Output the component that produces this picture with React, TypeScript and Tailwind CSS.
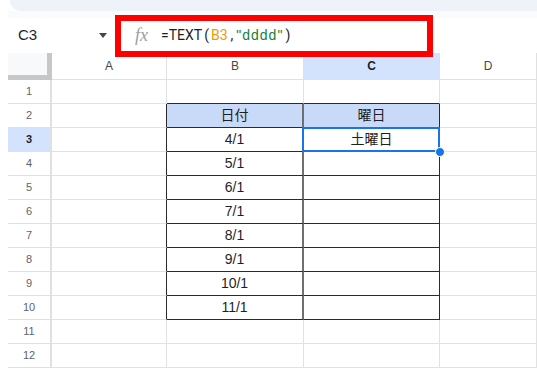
import React from "react";

const cols = [
  { key: "A", w: "w-[115px]" },
  { key: "B", w: "w-[137px]" },
  { key: "C", w: "w-[136px]" },
  { key: "D", w: "w-[97px]" },
];

const dates = ["4/1", "5/1", "6/1", "7/1", "8/1", "9/1", "10/1", "11/1"];

const cellText = (row: number, col: string) => {
  if (row === 2 && col === "B") return "日付";
  if (row === 2 && col === "C") return "曜日";
  if (row === 3 && col === "C") return "土曜日";
  if (col === "B" && row >= 3 && row <= 10) return dates[row - 3];
  return "";
};

const Cell = ({ row, col, w }: { row: number; col: string; w: string }) => {
  const inTable = row >= 2 && row <= 10 && (col === "B" || col === "C");
  let right = "border-r border-r-[#e2e2e2]";
  if (col === "A" && row >= 2 && row <= 10) right = "border-r border-r-[#2b2b2b]";
  if (col === "B" && inTable) right = "border-r-2 border-r-[#6f6f6f]";
  if (col === "C" && inTable) right = "border-r border-r-[#2b2b2b]";
  let bottom = "border-b border-b-[#e2e2e2]";
  if (row === 1 && (col === "B" || col === "C")) bottom = "border-b border-b-[#2b2b2b]";
  if (inTable) bottom = "border-b border-b-[#2b2b2b]";
  const bg = row === 2 && inTable ? "bg-[#c9daf8]" : "bg-white";
  const selected = row === 3 && col === "C";

  return (
    <div
      className={`relative flex h-[24px] shrink-0 items-center justify-center ${w} ${right} ${bottom} ${bg} font-['Liberation_Sans','Noto_Sans_CJK_JP',sans-serif] text-[14px] text-[#1f1f1f]`}
    >
      {cellText(row, col)}
      {selected && (
        <>
          <div className="absolute top-[-1px] left-[-2px] right-[-1px] bottom-[-1px] border-2 border-[#1a73e8]"></div>
          <div className="absolute right-[-6px] bottom-[-6px] z-10 h-[10px] w-[10px] rounded-full border border-white bg-[#1a73e8]"></div>
        </>
      )}
    </div>
  );
};

export default function App() {
  const rows = Array.from({ length: 12 }, (_, i) => i + 1);

  return (
    <div className="relative h-[380px] w-[537px] overflow-hidden bg-white font-['Liberation_Sans',sans-serif]">
      {/* toolbar edge */}
      <div className="ml-[10px] h-[11px] rounded-bl-[10px] bg-[#eef2f9]"></div>
      <div className="ml-[8px] h-[7px] bg-[#f9fbfd]"></div>

      {/* formula bar */}
      <div className="ml-[8px] flex h-[35px] items-center">
        <div className="flex w-[107px] items-center justify-between pl-[10px] pr-[8px]">
          <span className="text-[15px] text-[#1f1f1f]">C3</span>
          <span className="h-0 w-0 border-x-[4px] border-t-[5px] border-x-transparent border-t-[#444746]"></span>
        </div>
        <div className="h-[20px] w-px bg-[#dadce0]"></div>
        <span className="ml-[19px] font-['Liberation_Serif',serif] text-[18px] italic text-[#9aa0a6]">
          fx
        </span>
        <span className="ml-[13px] flex font-['Roboto',sans-serif] text-[14px] text-[#1f1f1f]">
          <span>=TEXT</span>
          <span className="mx-[2px]">(</span>
          <span className="text-[#f29900]">B3</span>
          <span className="mx-[3px]">,</span>
          <span className="font-['Liberation_Sans',sans-serif] tracking-[1px] text-[#188038]">"dddd"</span>
          <span className="ml-[2px]">)</span>
        </span>
      </div>

      {/* grid */}
      <div className="ml-[8px] flex flex-col">
        <div className="flex h-[27px]">
          <div className="h-[27px] w-[44px] shrink-0 border-r-[5px] border-b-[5px] border-[#c7c7c7] bg-[#f8f9fa]"></div>
          {cols.map((c) => (
            <div
              key={c.key}
              className={`flex h-[27px] shrink-0 items-center justify-center border-r border-b border-[#e0e0e0] text-[12px] ${c.w} ${
                c.key === "C" ? "bg-[#d3e3fd] font-bold text-[#1f1f1f]" : "bg-white text-[#444746]"
              }`}
            >
              {c.key}
            </div>
          ))}
        </div>
        {rows.map((r) => (
          <div key={r} className="flex h-[24px]">
            <div
              className={`flex h-[24px] w-[44px] shrink-0 items-center justify-center border-r-2 border-b border-r-[#e0e0e0] border-b-[#e0e0e0] text-[11px] ${
                r === 3 ? "bg-[#d3e3fd] font-bold text-[#1f1f1f]" : "bg-white text-[#5f6368]"
              }`}
            >
              {r}
            </div>
            {cols.map((c) => (
              <Cell key={c.key} row={r} col={c.key} w={c.w} />
            ))}
          </div>
        ))}
      </div>

      {/* annotation */}
      <div className="absolute top-[15px] left-[115px] h-[42px] w-[318px] border-[6px] border-[#ff0000]"></div>
    </div>
  );
}
